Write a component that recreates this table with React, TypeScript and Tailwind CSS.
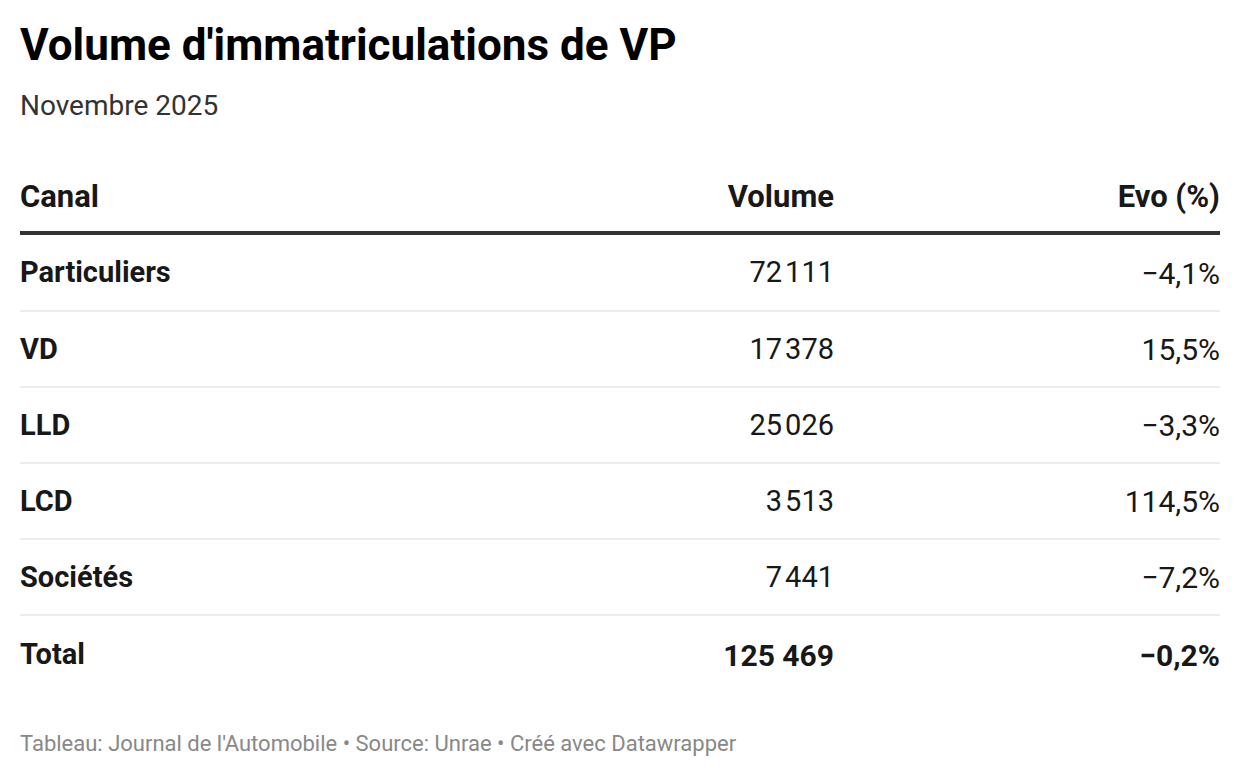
import React from "react";

const rows = [
  { canal: "Particuliers", volume: "72\u200A111", evo: "−4,1%" },
  { canal: "VD", volume: "17\u200A378", evo: "15,5%" },
  { canal: "LLD", volume: "25\u200A026", evo: "−3,3%" },
  { canal: "LCD", volume: "3\u200A513", evo: "114,5%" },
  { canal: "Sociétés", volume: "7\u200A441", evo: "−7,2%" },
];

export default function App() {
  return (
    <div
      className="w-[1240px] h-[778px] bg-white px-5 text-[#181818]"
      style={{ fontFamily: "Roboto, 'Liberation Sans', sans-serif" }}
    >
      <h1 className="pt-[19px] h-[71px] text-[44px] leading-[52px] font-bold text-black">
        Volume d'immatriculations de VP
      </h1>
      <div className="mt-[17px] h-[36px] text-[28px] leading-[36px] text-[#333333]">
        Novembre 2025
      </div>

      <div className="mt-[37px]">
        <div className="grid grid-cols-[414px_400px_386px] h-[74px] pt-[3px] items-center border-b-4 border-[#333333] text-[31px] font-bold">
          <div>Canal</div>
          <div className="text-right">Volume</div>
          <div className="text-right">Evo (%)</div>
        </div>
        {rows.map((r, i) => (
          <div
            key={r.canal}
            className={
              "grid grid-cols-[414px_400px_386px] pt-[1px] items-center border-b-2 border-[#ececec] text-[30px] " +
              (i === 0 ? "h-[77px]" : "h-[76px]")
            }
          >
            <div className="font-bold text-[29px]">{r.canal}</div>
            <div className="text-right text-[29px]">{r.volume}</div>
            <div className="text-right">{r.evo}</div>
          </div>
        ))}
        <div className="grid grid-cols-[414px_400px_386px] h-[76px] pt-[2px] items-center text-[30px] font-bold">
          <div className="text-[29px]">Total</div>
          <div className="text-right">125 469</div>
          <div className="text-right">−0,2%</div>
        </div>
      </div>

      <div className="mt-[40px] text-[22px] leading-[24px] text-[#888888]">
        Tableau: Journal de l'Automobile • Source: Unrae • Créé avec Datawrapper
      </div>
    </div>
  );
}
